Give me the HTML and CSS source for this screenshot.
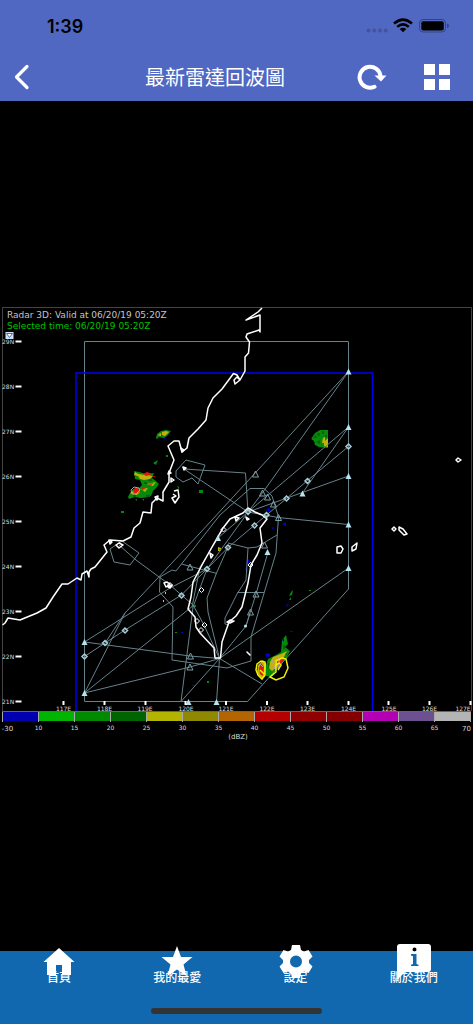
FILE: index.html
```html
<!DOCTYPE html>
<html lang="zh-Hant">
<head>
<meta charset="utf-8">
<meta name="viewport" content="width=device-width, initial-scale=1">
<title>最新雷達回波圖</title>
<link rel="stylesheet" href="styles.css">
</head>
<body>
<div class="app">
  <header class="header">
    <div class="status">
      <time class="clock">1:39</time>
      <svg class="indicators" width="84" height="16" viewBox="0 0 84 16" aria-hidden="true">
        <g fill="#4453a0"><circle cx="3.5" cy="12.5" r="2"/><circle cx="9.2" cy="12.5" r="2"/><circle cx="15" cy="12.5" r="2"/><circle cx="20.7" cy="12.5" r="2"/></g>
        <g fill="none" stroke="#000" stroke-width="2.5"><path d="M29 5.500Q38 -2.300 47 5.500M32.200 8.900Q38 3.800 43.800 8.900"/></g>
        <path d="M34.700 11Q38 8.400 41.300 11L38 14.300Z"/>
        <rect x="54.500" y="1.500" width="26" height="12.500" rx="3.500" fill="none" stroke="#36457f"/>
        <rect x="56.300" y="3.200" width="22.500" height="9.200" rx="2"/>
        <path d="M82 5.500q2 .5 2 2.200t-2 2.200z" fill="#36457f"/>
      </svg>
    </div>
    <div class="toolbar">
      <button class="tool" type="button" aria-label="返回"><svg width="16" height="26" viewBox="0 0 16 26"><path d="M13 2.500L2.500 13L13 23.500" fill="none" stroke="#fff" stroke-width="3.200" stroke-linecap="round" stroke-linejoin="round"/></svg></button>
      <h1 class="title">最新雷達回波圖</h1>
      <div class="actions">
        <button class="tool" type="button" aria-label="重新整理"><svg width="30" height="26" viewBox="0 0 30 26"><path d="M17.500 22.800A10.500 10.500 0 1 1 23.500 12" fill="none" stroke="#fff" stroke-width="4" stroke-linecap="round"/><path d="M17.500 11.500H29.500L24 17.500Z" fill="#fff"/></svg></button>
        <button class="tool" type="button" aria-label="選單"><svg width="26" height="26" viewBox="0 0 26 26"><path d="M0 0h11v11H0zM15 0h11v11H15zM0 15h11v11H0zM15 15h11v11H15z" fill="#fff"/></svg></button>
      </div>
    </div>
  </header>

  <main class="viewer">
    <svg class="radar" viewBox="0 303 473 446" role="img" aria-label="Radar 3D">
      <defs>
        <path id="tri" d="M0 -3L3 3H-3Z"/>
        <path id="dia" d="M0 -2.500L2.500 0L0 2.500L-2.500 0Z"/>
      </defs>
      <path class="frame" d="M2.500 711V307.500H471.500V711"/>

      <!-- radar echoes -->
      <g fill="#078a0b">
        <path d="M156 438l1-4 4-3 5-1 5 1-3 4-4 3-5-1-2 2z"/>
        <path d="M134 471l5 1 7 2 8-1-2 5 5 4 2 2-2 3-4 4-2 5-7-1-4 3-5-2-5-2 3-5 6-1 3-3-2-5-5-1z"/>
        <path d="M128 497l2-4 6-3 10 3 6-1-3 5-7 1-7-1-6 2z"/>
        <path d="M153 463l5-3-2 5zM166 455h2v2h-2zM177 486l2 1v3zM199 490h4v3h-4zM121 511h3v2h-3zM135 499h2v2zM142 499h2v2z"/>
        <path d="M311 439l4-6 5-3h8v18l-9-1-4-2-1-4z"/>
        <path d="M265 668l3-9 8-4 5-3 1-12 4-5 2 9-3 3 5 4-4 8-7 5-7 13-6-1z"/>
        <path d="M289 596l2-4 2-2-1 5zM289 600l2-3v3zM309 590h2v1h-2zM207 681h2v2h-2zM193 605h3v2h-3zM175 632h2v1h-2z"/>
      </g>
      <path d="M313 438l3-3 1 3zM317 433h3v3h-2zM316 442l4-2v4zM322 431h2v3h-2zM325 435h2v2h-2zM160 436l3-2v2zM148 478h4v3h-4zM144 482h3v2h-3zM146 495h4v2h-4zM133 495h3v2h-3zM283 645h2v4h-2zM284 653h3v2h-3zM278 657h2v2h-2zM268 663h2v5h-2z" fill="#056408"/>
      <g fill="#c0b20c">
        <path d="M158 435l3-2v3zM162 432l4-1 3 1-4 4-3-1zM135 472l3 2 8 1 7 1-3 3-6 1-4-1-2-3-4-1zM147 484l9-2-3 4zM130 493l6-4 4 3-3 3zM141 489l7-1-3 4zM323 438l2-1v4l3-3v9l-4-1v-3h-2z"/>
        <path d="M258 665l5-5 3 4-1 13-4 1-4-5zM270 662l3-5 8-3 6-3-3 6-3 7-9 7-3-3zM218 547l3 1v3h-3z"/>
      </g>
      <g fill="#dc1c08">
        <path d="M143 474l4-2 5 2-6 2zM151 476h4v1zM148 484l6-1-3 2zM133 490l3-3 4 3-2 3-4 1zM141 487l5 2-4 1zM259 668l2-5 3 4-1 9-3-2zM275 662l4-4 5 1-2 5-5 4zM219 549h2v1h-2z"/>
      </g>
      <path d="M131 490l3-3 5 1 1 2-4 4-4 0zM276 660l4-3-2 11zM260 664l3 3M272 660l3 9" fill="none" stroke="#b89bb0"/>
      <g fill="#0000c8">
        <path d="M266 509l3-1 2 2-1 2-3-1zM272 527l3 1-3 1zM282 524l4-2v4zM265 654l4-1 2 3-5 1zM282 640l2-2v4zM290 631h3v1h-3zM286 605l3-2-2 4zM311 437h1v3h-1zM246 562l3-3v6zM245 570l2-4 1 7zM192 685h3v1h-3zM181 632h2v1h-2zM164 438h3l-3 1z"/>
      </g>

      <!-- waypoint network -->
      <g class="routes">
        <path d="M84.500 341.500H348.500V589L247.500 701.500H84.500Z"/>
        <path d="M186 460L205 465L198 484L192 478L183 482L176 477V471ZM110 549L122 541L139 553L130 565L114 562Z"/>
        <path d="M184 469L245.500 473L248 512L184 469M119 545L136 560L170 585L193 605L204 625L219.500 658.500"/>
        <path d="M348.500 371.500L200 533L125 613L84.500 693M348.500 371.500L266 488L248 512L348.500 427L302.500 493"/>
        <path d="M348.500 446.500L307.500 480.500L286.500 498.500L266.500 515L228 547.500L181.500 595L125 630L105 643L84.500 656.500"/>
        <path d="M348.500 476L273 503L248 512L278 517.500L348.500 524.500M348.500 568L219.500 658.500L262 684"/>
        <path d="M176 571L220 515L250 488.500H264L272 496L278.500 517L276 553L251 637V661L227 668L172 660L173 607L159.500 592L160 577L172 570L176 571"/>
        <path d="M228 543L248 548L257 547L277 535M248 548L246 580L238 592.500H264M238 592L225 618V624L229 625M248 512L218 538L200 567L192 607"/>
        <path d="M228 547L216.500 573L207 598L208 612L219.500 658.500M181.500 564L217 573.500M246 515L207 569L193 607L181 701.500L219.500 658.500"/>
        <path d="M84.500 642L170 588L207 569M84.500 642L190 656L219.500 658.500L190 667L84.500 693L194 605M105 643L125 613M216.500 702L219.500 658.500L246 626L250 613L256 594L268 552M246 626L250 613"/>
      </g>
      <path class="sector" d="M76 711V373H372.500V711"/>

      <!-- coastlines -->
      <g class="coast">
        <path d="M262 308L258 312L246 320L260 315V332L259 330L247 334L246 337L249.500 342L248.500 353L245 357V371L240 380L235 384L234 380L237 377L240 380L237 375L233.500 373.500L222 389L213 398L208 408L206 420L198 429L189 438L187 448L182 452L179 441L174 441L168 446L174 460L169 473V482L163 492V501L157 498L152 503L151 513L143 512L140 523L134 528L131 537L123 541L110 540L104 545L107 552L95 567L91 569L89 572V577L87 571L82 574L81 580L77 578L68 584L62 584L53 597L46 608L37 613L20 620L8 618L5 623L2.500 625"/>
        <path d="M248 508L255 512L262 515L267 519L260 528L262 543L257 555L251 565L248 583L242 607L236 616L229 622L222 642L220.500 658H215L214 648L200 633L196 627L195 617L188 609L191 597L193 582L202 565L212 547L223 528L230 519L243 513Z"/>
        <path d="M174 491L178 490L179 497L175 503L172 498L176 496L173 494M181 448L184 450L182 452ZM183 467L186 468L184 470ZM169 471l2 2-3 1zM171 478l3 2-3 2zM155 497l3-1-1 4zM109 540l3 2-2 2zM116 545l3-2 4 2-4 3zM164 583l3-1 3 2-4 3zM168 587l4-2-2 3zM235 517l4 1-3 3zM246 517l3 2-2 1zM210 553l3 2-2 3zM227 622l3-2 2 1 2 0-4 2zM247 652l3 3zM163 601h1M165 593h1"/>
        <path d="M337 547l4-1 2 3-2 4-4 0zM352 547l5-4-1 6-4 2zM392 529l2-2 2 2-2 2zM399 527l4 2 4 5-3 1-5-5zM456 460l2-2 3 2-3 2z"/>
      </g>
      <path class="storm" d="M257 664l4-3 4 1v13l-3 4-4-4-2-5zM276 661l6-3 4 1 2 9-4 9-8 3-6-3 6-5zM275 666l4-3 2 2-3 5M260 670l4 4"/>

      <g fill="#b8e4ee">
        <use href="#tri" x="348.500" y="371.500"/><use href="#tri" x="348.500" y="427"/><use href="#tri" x="348.500" y="476"/><use href="#tri" x="348.500" y="524.500"/><use href="#tri" x="348.500" y="568"/><use href="#tri" x="84.500" y="642"/><use href="#tri" x="84.500" y="693"/><use href="#tri" x="188.500" y="702"/><use href="#tri" x="216.500" y="702"/><use href="#tri" x="302.500" y="493.500"/><use href="#tri" x="218" y="538"/><use href="#tri" x="267.500" y="552"/>
        <circle cx="245.500" cy="626" r="1.500"/>
      </g>
      <g fill="none" stroke="#7f9fa7">
        <use href="#tri" x="255.500" y="474"/><use href="#tri" x="262.500" y="493"/><use href="#tri" x="267.500" y="497"/><use href="#tri" x="273.500" y="504"/><use href="#tri" x="278.500" y="517.500"/><use href="#tri" x="264.500" y="545"/><use href="#tri" x="256" y="594"/><use href="#tri" x="250.500" y="612"/><use href="#tri" x="190" y="567"/><use href="#tri" x="190.500" y="656"/><use href="#tri" x="190" y="667"/>
      </g>
      <g fill="none" stroke="#a4ccd6" stroke-width="1.500">
        <use href="#dia" x="348.500" y="446.500"/><use href="#dia" x="307.500" y="481"/><use href="#dia" x="286.500" y="498.500"/><use href="#dia" x="266.500" y="515"/><use href="#dia" x="248" y="512"/><use href="#dia" x="254.500" y="525.500"/><use href="#dia" x="228" y="547.500"/><use href="#dia" x="207" y="569"/><use href="#dia" x="181.500" y="595.500"/><use href="#dia" x="125" y="630.500"/><use href="#dia" x="105" y="643"/><use href="#dia" x="84.500" y="656.500"/>
      </g>
      <g fill="none" stroke="#fff">
        <use href="#dia" x="223.500" y="529.500"/><use href="#dia" x="250.500" y="565"/><use href="#dia" x="201.500" y="590"/><use href="#dia" x="204.500" y="625"/><use href="#dia" x="197" y="621"/><use href="#dia" x="201" y="630"/><use href="#dia" x="170" y="585"/>
      </g>

      <!-- axes -->
      <path class="ticks" d="M15.500 341.500h6M15.500 386.500h6M15.500 431.500h6M15.500 476.500h6M15.500 521.500h6M15.500 566.500h6M15.500 611.500h6M15.500 656.500h6M15.500 701.500h6M63.500 701v4M104.500 701v4M145.500 701v4M185.500 701v4M226 701v4M267 701v4M307.500 701v4M348.500 701v4M388.500 701v4M429.500 701v4M470.500 701v4"/>
      <g class="axis">
        <text x="2" y="344">29N</text><text x="2" y="389">28N</text><text x="2" y="434">27N</text><text x="2" y="479">26N</text><text x="2" y="524">25N</text><text x="2" y="569">24N</text><text x="2" y="614">23N</text><text x="2" y="659">22N</text><text x="2" y="704">21N</text>
      </g>
      <g class="axis mid">
        <text x="63.500" y="711">117E</text><text x="104.500" y="711">118E</text><text x="145" y="711">119E</text><text x="186" y="711">120E</text><text x="226" y="711">121E</text><text x="267" y="711">122E</text><text x="307.500" y="711">123E</text><text x="348.500" y="711">124E</text><text x="389" y="711">125E</text><text x="429.500" y="711">126E</text><text x="463" y="711">127E</text>
      </g>
      <rect x="5.500" y="332" width="8" height="7" fill="#d5e2f0"/><path d="M6.500 333.500h6l-3 4z" fill="#fff" stroke="#4b64b5"/>
      <text class="valid" x="7" y="318">Radar 3D: Valid at 06/20/19 05:20Z</text>
      <text class="selected" x="7" y="328.500">Selected time: 06/20/19 05:20Z</text>

      <!-- reflectivity scale -->
      <g>
        <path d="M2 712h36v9H2z" fill="#0000b0"/><path d="M38 712h36v9H38z" fill="#00b400"/><path d="M74 712h36v9H74z" fill="#008a00"/><path d="M110 712h36v9h-36z" fill="#006400"/><path d="M146 712h36v9h-36z" fill="#b4b400"/><path d="M182 712h36v9h-36z" fill="#908800"/><path d="M218 712h36v9h-36z" fill="#b46400"/><path d="M254 712h36v9h-36z" fill="#b40000"/><path d="M290 712h36v9h-36z" fill="#900000"/><path d="M326 712h36v9h-36z" fill="#840000"/><path d="M362 712h36v9h-36z" fill="#b400b4"/><path d="M398 712h36v9h-36z" fill="#6c5090"/><path d="M434 712h37v9h-37z" fill="#b4b4b4"/>
        <path d="M2 711.500H471" stroke="#656565"/>
        <path d="M2.500 712v10M38.500 712v10M74.500 712v10M110.500 712v10M146.500 712v10M182.500 712v10M218.500 712v10M254.500 712v10M290.500 712v10M326.500 712v10M362.500 712v10M398.500 712v10M434.500 712v10M470.500 712v10" stroke="#aaa"/>
      </g>
      <g class="axis mid">
        <text class="end" x="7.500" y="731">-30</text><text x="38.500" y="730">10</text><text x="74.500" y="730">15</text><text x="110.500" y="730">20</text><text x="146.500" y="730">25</text><text x="182.500" y="730">30</text><text x="218.500" y="730">35</text><text x="254.500" y="730">40</text><text x="290.500" y="730">45</text><text x="326.500" y="730">50</text><text x="362.500" y="730">55</text><text x="398.500" y="730">60</text><text x="434.500" y="730">65</text><text class="end" x="466.500" y="731">70</text>
        <text class="unit" x="238" y="739">(dBZ)</text>
      </g>
    </svg>
  </main>

  <footer class="footer">
    <nav class="tabs">
      <a class="tab" href="#home">
        <svg class="icon" width="36" height="36" viewBox="0 0 36 36"><path d="M18 4L33.500 18H30V31H21V21H15V31H6V18H2.500Z" fill="#fff"/></svg>
        <span class="label">首頁</span>
      </a>
      <a class="tab" href="#favorites">
        <svg class="icon" width="36" height="36" viewBox="0 0 36 36"><path d="M18 2L22 13H33.500L24.500 20.500L27.500 32L18 25.500L8.500 32L11.500 20.500L2.500 13H14Z" fill="#fff"/></svg>
        <span class="label">我的最愛</span>
      </a>
      <a class="tab" href="#settings">
        <svg class="icon" width="36" height="36" viewBox="0 0 36 36"><path fill="#fff" fill-rule="evenodd" d="M14 1H22L23 6L26 7.500L30.500 6L34.500 12.500L31 16V19L34.500 22.500L30.500 29L26 27.500L23 29.500L22 34H14L13 29.500L10 27.500L5.500 29L1.500 22.500L5 19V16L1.500 12.500L5.500 6L10 7.500L13 6ZM18 11.500A6 6 0 1 0 18 23.500A6 6 0 1 0 18 11.500Z"/></svg>
        <span class="label">設定</span>
      </a>
      <a class="tab" href="#about">
        <svg class="icon" width="36" height="36" viewBox="0 0 36 36"><path fill="#fff" fill-rule="evenodd" d="M4 0H32Q35 0 35 3V25Q35 28 32 28H9L1 36V3Q1 0 4 0ZM18.500 3.500A2 2 0 1 0 18.500 7.500A2 2 0 1 0 18.500 3.500ZM15 10V11.500L17 12.200V20L15 20.700V22H22.500V20.700L20.500 20V10Z"/></svg>
        <span class="label">關於我們</span>
      </a>
    </nav>
    <div class="home-bar"></div>
  </footer>
</div>
</body>
</html>
```
FILE: styles.css
```css
* { box-sizing: border-box; }

body {
  margin: 0;
  background: #000;
  color: #fff;
  font-family: Inter, "Noto Sans CJK TC", sans-serif;
}

.app {
  display: flex;
  flex-direction: column;
  min-height: 100vh;
}

.header { background: #5068c1; }

.status {
  display: flex;
  align-items: center;
  justify-content: space-between;
  height: 52px;
  padding: 0 24px 0 47px;
  color: #000;
}

.clock {
  font-size: 18px;
  font-weight: 600;
}

.toolbar {
  display: grid;
  grid-template-columns: 1fr auto 1fr;
  align-items: center;
  height: 49px;
  padding: 0 23px 0 14px;
}

.title {
  margin: 0;
  padding-right: 34px;
  font-family: "Noto Sans CJK TC", sans-serif;
  font-size: 20px;
  font-weight: 400;
  line-height: 28px;
}

.actions {
  display: flex;
  justify-content: flex-end;
  gap: 37px;
}

.tool {
  display: flex;
  padding: 0;
  border: 0;
  background: none;
  cursor: pointer;
}

.viewer {
  display: flex;
  flex: 1;
  align-items: center;
}

.radar {
  display: block;
  width: 100%;
  font-family: "DejaVu Sans", sans-serif;
}

.frame { fill: none; stroke: #444; }
.routes { fill: none; stroke: #66838b; stroke-width: 1; }
.sector { fill: none; stroke: #0000f0; stroke-width: 1.5; }
.coast { fill: none; stroke: #fff; stroke-width: 1.5; stroke-linejoin: round; }
.storm { fill: none; stroke: #f2f200; stroke-width: 1.5; }
.ticks { fill: none; stroke: #fff; stroke-width: 2; }
.axis { fill: #dcdcdc; font-size: 6px; }
.mid { text-anchor: middle; }
.end, .unit { font-size: 7px; }
.valid { fill: #c4c4c4; font-size: 9px; }
.selected { fill: #00c000; font-size: 9px; }

.footer {
  height: 73px;
  background: #1268ae;
}

.tabs {
  display: grid;
  grid-template-columns: repeat(4, 1fr);
  margin-top: -7px;
}

.tab {
  display: flex;
  flex-direction: column;
  align-items: center;
  color: #fff;
  text-decoration: none;
}

.icon { display: block; }

.label {
  margin-top: -12px;
  font-family: "Noto Sans CJK TC", sans-serif;
  font-size: 12px;
  font-weight: 500;
  line-height: 18px;
}

.home-bar {
  width: 36%;
  height: 6px;
  margin: 22px auto 0;
  border-radius: 3px;
  background: #333;
}
```
